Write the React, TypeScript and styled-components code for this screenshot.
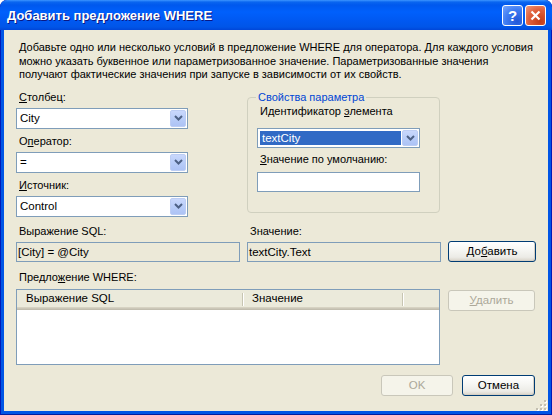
import styled, { createGlobalStyle } from "styled-components";

const GlobalStyle = createGlobalStyle`
  html, body { margin: 0; padding: 0; background: #ffffff; }
  body { font-family: "Liberation Sans", Arial, sans-serif; font-size: 11px; color: #000; }
`;

const Window = styled.div`
  width: 552px;
  height: 415px;
  display: flex;
  flex-direction: column;
  background: #0055e5;
  border-radius: 7px 7px 0 0;
  box-shadow: inset 1px 0 #0019b8, inset -1px 0 #0019b8, inset 0 -1px #001ea0;
  overflow: hidden;
`;

const TitleBar = styled.div`
  height: 30px;
  flex: none;
  display: flex;
  align-items: center;
  gap: 2px;
  padding: 0 6px 0 7px;
  border-radius: 7px 7px 0 0;
  background: linear-gradient(
    to bottom,
    #3d95ff 0px,
    #0a66f0 2px,
    #0058ee 5px,
    #0060fc 12px,
    #0059f2 20px,
    #0055e8 27px,
    #0046d8 30px
  );
`;

const Title = styled.span`
  flex: 1;
  margin-top: 1px;
  color: #ffffff;
  font: bold 13px "Liberation Sans", Arial, sans-serif;
  text-shadow: 1px 1px #0a1883;
  white-space: nowrap;
`;

const CaptionButton = styled.div<{ $kind: "help" | "close" }>`
  width: 21px;
  height: 21px;
  box-sizing: border-box;
  border: 1px solid #ffffff;
  border-radius: 3px;
  display: flex;
  align-items: center;
  justify-content: center;
  color: #ffffff;
  font: bold 15px "Liberation Sans", Arial, sans-serif;
  background: ${(p) =>
    p.$kind === "close"
      ? "radial-gradient(circle at 75% 80%, #c43c17 0%, #e0603c 55%, #f09a7e 100%)"
      : "radial-gradient(circle at 75% 80%, #2257d8 0%, #3f7cf2 55%, #76a6ff 100%)"};
`;

const Client = styled.div`
  flex: 1;
  margin: 0 4px 4px;
  background: #ece9d8;
  padding: 11px 12px 0 12px;
  display: flex;
  flex-direction: column;
  position: relative;
`;

const Intro = styled.p`
  margin: 0 0 0 3px;
  line-height: 13.5px;
  white-space: nowrap;
`;

const TopRow = styled.div`
  display: flex;
  align-items: flex-start;
  margin-top: 9px;
`;

const Column = styled.div`
  width: 172px;
  display: flex;
  flex-direction: column;
  gap: 6px;
`;

const Field = styled.div<{ $gap?: number; $top?: number }>`
  display: flex;
  flex-direction: column;
  gap: ${(p) => p.$gap ?? 4}px;
  margin-top: ${(p) => p.$top ?? 0}px;
`;

const Label = styled.div`
  line-height: 13px;
  padding-left: 3px;
  white-space: nowrap;
`;

const Key = styled.span`
  text-decoration: underline;
`;

const Combo = styled.div<{ $selected?: boolean; $h?: number }>`
  height: ${(p) => p.$h ?? 21}px;
  box-sizing: border-box;
  border: 1px solid #7f9db9;
  background: #ffffff;
  display: flex;
  align-items: stretch;
  padding: 1px;
  gap: 1px;
`;

const ComboText = styled.div<{ $selected?: boolean }>`
  flex: 1;
  display: flex;
  align-items: center;
  padding-left: 2px;
  margin: ${(p) => (p.$selected ? "1px 0 1px 1px" : "0")};
  background: ${(p) => (p.$selected ? "#316ac5" : "transparent")};
  color: ${(p) => (p.$selected ? "#ffffff" : "#000000")};
  font-size: 11.5px;
`;

const DropButton = styled.div`
  width: 16px;
  box-sizing: border-box;
  border: 1px solid #bccdf4;
  border-radius: 2px;
  background: linear-gradient(to bottom, #c9d8fc 0%, #b6cbf8 60%, #adc3f5 100%);
  display: flex;
  align-items: center;
  justify-content: center;
`;

const TextBox = styled.div<{ $readonly?: boolean }>`
  height: 20px;
  box-sizing: border-box;
  border: 1px solid #7f9db9;
  background: ${(p) => (p.$readonly ? "#ece9d8" : "#ffffff")};
  display: flex;
  align-items: center;
  padding-left: 1px;
  font-size: 11.5px;
  white-space: nowrap;
`;

const Group = styled.fieldset`
  margin: 0 0 0 59px;
  width: 193px;
  box-sizing: border-box;
  border: 1px solid #d0d0bf;
  border-radius: 4px;
  padding: 0 19px 20px 9px;
  min-width: 0;
`;

const Legend = styled.legend`
  color: #0046d5;
  line-height: 13px;
  padding: 0 2px;
  margin-left: -1px;
  white-space: nowrap;
`;

const MidRow = styled.div`
  display: flex;
  align-items: flex-end;
  gap: 7px;
  margin-top: 8px;
`;

const Cell = styled.div<{ $w: number }>`
  width: ${(p) => p.$w}px;
  display: flex;
  flex-direction: column;
  gap: 4px;
`;

const Button = styled.button<{ $w: number; $top?: number }>`
  width: ${(p) => p.$w}px;
  height: 21px;
  margin-top: ${(p) => p.$top ?? 0}px;
  box-sizing: border-box;
  padding: 0;
  font: 11.5px "Liberation Sans", Arial, sans-serif;
  color: #000000;
  border: 1px solid #003c74;
  border-radius: 3px;
  background: linear-gradient(to bottom, #ffffff 0%, #f7f7f4 40%, #ecebe6 80%, #d8d3c8 100%);
  box-shadow: inset -1px -1px #d6d0c5;
  &:disabled {
    border-color: #c9c7ba;
    background: #f5f4ea;
    color: #aca899;
    box-shadow: none;
  }
`;

const ListLabel = styled(Label)`
  margin-top: 9px;
`;

const ListRow = styled.div`
  display: flex;
  align-items: flex-start;
  gap: 8px;
  margin-top: 5px;
`;

const ListView = styled.div`
  width: 424px;
  height: 76px;
  box-sizing: border-box;
  border: 1px solid #7f9db9;
  background: #ffffff;
`;

const Header = styled.div`
  height: 20px;
  display: flex;
  background: #ebeadb;
  box-shadow: inset 0 -1px #c1bdae, inset 0 -2px #cbc7b8, inset 0 -3px #d6d2c2;
`;

const HeaderCell = styled.div<{ $w?: number }>`
  width: ${(p) => (p.$w ? `${p.$w}px` : "auto")};
  flex: ${(p) => (p.$w ? "none" : "1")};
  height: 17px;
  box-sizing: border-box;
  display: flex;
  align-items: center;
  padding-left: 9px;
  position: relative;
  font-size: 11.5px;
  &::after {
    content: "";
    display: ${(p) => (p.$w ? "block" : "none")};
    position: absolute;
    right: 0;
    top: 3px;
    bottom: 1px;
    width: 1px;
    background: #c7c5b2;
    box-shadow: 1px 0 #ffffff;
  }
`;

const Footer = styled.div`
  display: flex;
  justify-content: flex-end;
  gap: 9px;
  margin-top: 10px;
  padding-right: 1px;
`;

const Grip = styled.svg`
  position: absolute;
  right: 0;
  bottom: 0;
`;

const Chevron = () => (
  <svg width="9" height="6" viewBox="0 0 9 6">
    <path d="M1 1 L4.5 4.5 L8 1" fill="none" stroke="#4d6185" strokeWidth="2" />
  </svg>
);

const ComboBox = ({ value, selected, h }: { value: string; selected?: boolean; h?: number }) => (
  <Combo $h={h}>
    <ComboText $selected={selected}>{value}</ComboText>
    <DropButton>
      <Chevron />
    </DropButton>
  </Combo>
);

const gripDots = [
  [8, 1],
  [8, 5],
  [4, 5],
  [8, 9],
  [4, 9],
  [0, 9],
];

export default function App() {
  return (
    <>
      <GlobalStyle />
      <Window>
        <TitleBar>
          <Title>Добавить предложение WHERE</Title>
          <CaptionButton $kind="help">?</CaptionButton>
          <CaptionButton $kind="close">
            <svg width="11" height="11" viewBox="0 0 11 11">
              <path d="M1.5 1.5 L9.5 9.5 M9.5 1.5 L1.5 9.5" stroke="#fff" strokeWidth="2.2" />
            </svg>
          </CaptionButton>
        </TitleBar>
        <Client>
          <Intro>
            Добавьте одно или несколько условий в предложение WHERE для оператора. Для каждого условия
            <br />
            можно указать буквенное или параметризованное значение. Параметризованные значения
            <br />
            получают фактические значения при запуске в зависимости от их свойств.
          </Intro>

          <TopRow>
            <Column>
              <Field>
                <Label>
                  <Key>С</Key>толбец:
                </Label>
                <ComboBox value="City" />
              </Field>
              <Field>
                <Label>
                  О<Key>п</Key>ератор:
                </Label>
                <ComboBox value="=" />
              </Field>
              <Field>
                <Label>
                  <Key>И</Key>сточник:
                </Label>
                <ComboBox value="Control" />
              </Field>
            </Column>

            <Group>
              <Legend>Свойства параметра</Legend>
              <Field $gap={10} $top={1}>
                <Label>
                  Идентификатор <Key>э</Key>лемента
                </Label>
                <ComboBox value="textCity" selected h={20} />
              </Field>
              <Field $gap={6} $top={5}>
                <Label>
                  <Key>З</Key>начение по умолчанию:
                </Label>
                <TextBox />
              </Field>
            </Group>
          </TopRow>

          <MidRow>
            <Cell $w={224}>
              <Label>Выражение SQL:</Label>
              <TextBox $readonly>[City] = @City</TextBox>
            </Cell>
            <Cell $w={194}>
              <Label>Значение:</Label>
              <TextBox $readonly>textCity.Text</TextBox>
            </Cell>
            <Button $w={88}>
              До<Key>б</Key>авить
            </Button>
          </MidRow>

          <ListLabel>
            Предло<Key>ж</Key>ение WHERE:
          </ListLabel>
          <ListRow>
            <ListView>
              <Header>
                <HeaderCell $w={226}>Выражение SQL</HeaderCell>
                <HeaderCell $w={160}>Значение</HeaderCell>
                <HeaderCell />
              </Header>
            </ListView>
            <Button $w={87} $top={1} disabled>
              <Key>У</Key>далить
            </Button>
          </ListRow>

          <Footer>
            <Button $w={72} disabled>
              OK
            </Button>
            <Button $w={73}>Отмена</Button>
          </Footer>

          <Grip width="12" height="12" viewBox="0 0 12 12">
            {gripDots.map(([x, y]) => (
              <g key={`${x}-${y}`}>
                <rect x={x + 1} y={y + 1} width="2" height="2" fill="#ffffff" />
                <rect x={x} y={y} width="2" height="2" fill="#c3bfb1" />
              </g>
            ))}
          </Grip>
        </Client>
      </Window>
    </>
  );
}
